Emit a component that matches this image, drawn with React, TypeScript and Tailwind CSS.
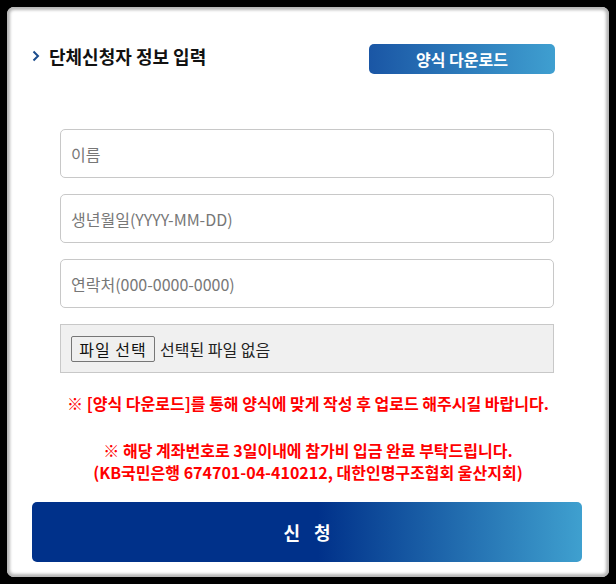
import React from "react";

const font = { fontFamily: '"Noto Sans CJK KR", "Noto Sans", sans-serif' };

function Field({ placeholder }: { placeholder: string }) {
  return (
    <div className="flex h-[49px] w-full items-center rounded-[5px] border border-[#c8c8c8] bg-white pl-[10px] text-[16px] text-[#777]">
      {placeholder}
    </div>
  );
}

export default function App() {
  return (
    <div className="h-[584px] w-[616px] bg-black p-[7px]" style={font}>
      <div className="flex h-[570px] w-[602px] flex-col rounded-[7px] bg-white px-[25px] shadow-[inset_0_0_3px_3px_#b5b5b5]">
        <div className="mt-[37px] flex h-[29px] items-center justify-between pr-[29px]">
          <div className="mb-[6px] flex items-center gap-[9px]">
            <svg width="8" height="12" viewBox="0 0 8 12" className="mt-[1px]">
              <polyline points="1.5,1.5 6,6 1.5,10.5" fill="none" stroke="#1b4c8c" strokeWidth="2" />
            </svg>
            <span className="text-[18px] font-bold leading-none text-[#111]">단체신청자 정보 입력</span>
          </div>
          <div className="flex h-[30px] w-[186px] items-center justify-center rounded-[5px] bg-[linear-gradient(90deg,#1a56a5,#3f9fd0)] text-[16px] font-bold text-white">
            양식 다운로드
          </div>
        </div>

        <div className="ml-[28px] mt-[56px] flex w-[494px] flex-col gap-[16px]">
          <Field placeholder="이름" />
          <Field placeholder="생년월일(YYYY-MM-DD)" />
          <Field placeholder="연락처(000-0000-0000)" />
          <div className="flex h-[49px] w-full items-center gap-[5px] border border-[#c8c8c8] bg-[#f0f0f0] pl-[10px] text-[16px] text-[#222]">
            <span className="flex h-[26px] w-[84px] items-center justify-center rounded-[2px] border border-[#767676] bg-[#efefef] text-[16px] tracking-[1px] text-[#111]">
              파일 선택
            </span>
            <span>선택된 파일 없음</span>
          </div>
        </div>

        <div className="mt-[19px] text-center text-[16px] font-bold leading-[22px] text-[#f00]">
          ※ [양식 다운로드]를 통해 양식에 맞게 작성 후 업로드 해주시길 바랍니다.
        </div>
        <div className="mt-[25px] text-center text-[16px] font-bold leading-[22px] text-[#f00]">
          <div>※ 해당 계좌번호로 3일이내에 참가비 입금 완료 부탁드립니다.</div>
          <div>(KB국민은행 674701-04-410212, 대한인명구조협회 울산지회)</div>
        </div>

        <div className="mt-[19px] flex h-[60px] w-[550px] items-center justify-center rounded-[5px] bg-[linear-gradient(90deg,#00318a_52%,#3fa0cf)] text-[18px] font-bold tracking-[14px] text-white">
          <span className="pl-[14px]">신청</span>
        </div>
      </div>
    </div>
  );
}
